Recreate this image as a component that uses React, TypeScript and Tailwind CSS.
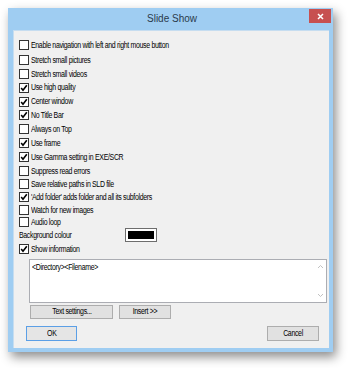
import React from "react";

const font = { fontFamily: '"Liberation Sans", Arial, sans-serif' };

const txt = "inline-block text-[8.5px] leading-none tracking-[-0.4px] text-black whitespace-nowrap scale-x-[0.82]";

function Box({ checked }: { checked?: boolean }) {
  return (
    <div className="w-[10px] h-[10px] border border-[#333333] bg-white flex items-center justify-center shrink-0">
      {checked && (
        <svg width="8" height="8" viewBox="0 0 8 8">
          <path d="M1.2 4 L3 6.2 L6.8 1.2" fill="none" stroke="#000" strokeWidth="1.6" />
        </svg>
      )}
    </div>
  );
}

function Row({ label, checked, h }: { label: string; checked?: boolean; h: string }) {
  return (
    <div className={`flex items-center gap-[2px] ${h}`}>
      <Box checked={checked} />
      <span className={`${txt} origin-left`}>{label}</span>
    </div>
  );
}

export default function App() {
  return (
    <div className="w-[350px] h-[368px] bg-white pl-[8px] pt-[8px] leading-none" style={font}>
      <div className="w-[325px] h-[344px] bg-[#9fcdf2] flex flex-col shadow-[3px_5px_10px_rgba(0,0,0,0.45)] relative">
        <div className="h-[22px] flex items-center justify-center pl-[3px]">
          <span className="text-[10px] text-[#2b3b4b] leading-none">Slide Show</span>
        </div>
        <div className="absolute right-[2px] top-[1px] w-[22px] h-[14px] bg-[#c75050] flex items-center justify-center">
          <svg width="7" height="7" viewBox="0 0 7 7">
            <path d="M1 1 L6 6 M6 1 L1 6" stroke="#fff" strokeWidth="1.5" />
          </svg>
        </div>
        <div className="ml-[5px] mr-[4px] mb-[4px] flex-1 bg-[#f0f0f0] border-t border-l border-[#c6ddf0] pt-[7px] pl-[5px] flex flex-col">
          <Row h="h-[14px]" label="Enable navigation with left and right mouse button" />
          <div className="mt-px flex flex-col">
            <Row h="h-[13.86px]" label="Stretch small pictures" />
            <Row h="h-[13.86px]" label="Stretch small videos" />
            <Row h="h-[13.86px]" checked label="Use high quality" />
            <Row h="h-[13.86px]" checked label="Center window" />
            <Row h="h-[13.86px]" checked label="No Title Bar" />
            <Row h="h-[13.86px]" label="Always on Top" />
            <Row h="h-[13.86px]" checked label="Use frame" />
            <Row h="h-[13.86px]" checked label="Use Gamma setting in EXE/SCR" />
            <Row h="h-[13.86px]" label="Suppress read errors" />
            <Row h="h-[13px]" label="Save relative paths in SLD file" />
            <Row h="h-[13px]" checked label="'Add folder' adds folder and all its subfolders" />
            <Row h="h-[12.5px]" label="Watch for new images" />
            <Row h="h-[12.5px]" label="Audio loop" />
            <div className="flex items-center h-[13.5px]">
              <div className="w-[106px] flex items-center">
                <span className={`${txt} origin-left`}>Background colour</span>
              </div>
              <div className="w-[32px] h-[14px] border border-[#6d6d6d] bg-white p-[2px]">
                <div className="w-full h-full bg-black" />
              </div>
            </div>
            <Row h="h-[13.5px]" checked label="Show information" />
          </div>
          <div className="mt-[3px] ml-[10px] w-[298px] h-[44px] bg-white border border-[#abadb3] flex">
            <div className="flex-1 pl-[2px] pt-[3px] flex items-start">
              <span className={`${txt} origin-left`}>&lt;Directory&gt;&lt;Filename&gt;</span>
            </div>
            <div className="w-[12px] flex flex-col justify-between items-center py-[4px]">
              <svg width="7" height="5" viewBox="0 0 7 5"><path d="M1 4 L3.5 1.5 L6 4" fill="none" stroke="#c2c2c2" strokeWidth="1" /></svg>
              <svg width="7" height="5" viewBox="0 0 7 5"><path d="M1 1 L3.5 3.5 L6 1" fill="none" stroke="#c2c2c2" strokeWidth="1" /></svg>
            </div>
          </div>
          <div className="mt-[2px] ml-[11px] flex gap-[6px]">
            <div className="w-[83px] h-[14px] bg-[#e1e1e1] border border-[#adadad] flex items-center justify-center">
              <span className={`${txt} origin-center`}>Text settings...</span>
            </div>
            <div className="w-[52px] h-[14px] bg-[#e1e1e1] border border-[#adadad] flex items-center justify-center">
              <span className={`${txt} origin-center`}>Insert &gt;&gt;</span>
            </div>
          </div>
          <div className="mt-[7px] ml-[7px] mr-[10px] flex justify-between">
            <div className="w-[51px] h-[15px] bg-[#e5e5e5] border border-[#5b9fe6] flex items-center justify-center">
              <span className={`${txt} origin-center`}>OK</span>
            </div>
            <div className="w-[52px] h-[15px] bg-[#e1e1e1] border border-[#adadad] flex items-center justify-center">
              <span className={`${txt} origin-center`}>Cancel</span>
            </div>
          </div>
        </div>
      </div>
    </div>
  );
}
